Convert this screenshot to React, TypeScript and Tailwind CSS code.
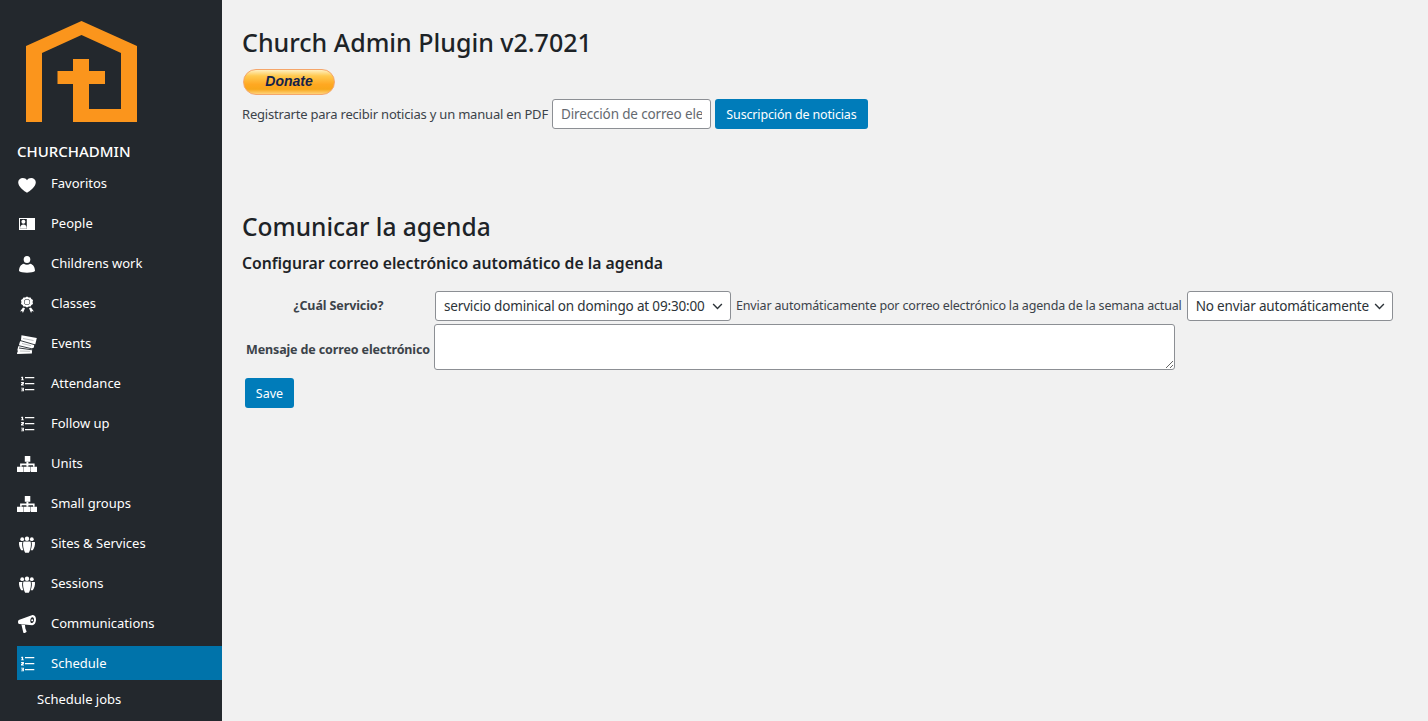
import type { ReactNode } from 'react';

const font = "[font-family:'Noto_Sans',sans-serif]";

function Svg({ children }: { children: ReactNode }) {
  return (
    <svg viewBox="0 0 20 20" className="h-5 w-5 shrink-0" fill="currentColor">
      {children}
    </svg>
  );
}

const HeartIcon = () => (
  <Svg>
    <path d="M10 18.800C7.500 17 1.200 13.300 1.200 8.200 1.200 5.500 3.400 3.900 5.800 3.900c1.800 0 3.400.9 4.200 2.300.8-1.400 2.400-2.300 4.200-2.300 2.400 0 4.600 1.600 4.600 4.300 0 5.100-6.300 8.800-8.800 10.600z" />
  </Svg>
);

const IdIcon = () => (
  <Svg>
    <path fillRule="evenodd" d="M2 4h16v12H2zM3 5v10h6.800V5z" />
    <circle cx="6.400" cy="7.800" r="2" />
    <path d="M3 14.800c0-3 1.500-4.200 3.400-4.200s3.400 1.200 3.400 4.200zM11 6.500h6v1.300h-6zM11 9.300h6v1.300h-6zM11 12.100h6v1.300h-6z" />
  </Svg>
);

const UserIcon = () => (
  <Svg>
    <ellipse cx="10" cy="5.500" rx="3.300" ry="3.600" />
    <path d="M2 17c0-3.800 1.800-6.600 4.800-7.300 1.800 1.300 4.600 1.300 6.400 0 3 .7 4.800 3.500 4.800 7.300-1.800 2.200-14.200 2.200-16 0z" />
  </Svg>
);

const AwardIcon = () => (
  <Svg>
    <path fillRule="evenodd" d="M10 2.600l1.700 .9 1.900-.1.800 1.700 1.600 1-.4 1.900.4 1.900-1.600 1-.8 1.700-1.900-.1-1.700.9-1.700-.9-1.900.1-.8-1.700-1.600-1 .4-1.900-.4-1.900 1.600-1 .8-1.700 1.900.1zM10 5a3 3 0 1 0 0 6 3 3 0 0 0 0-6z" />
    <circle cx="10" cy="8" r="2.500" />
    <path d="M6 13.600l2 .6-2.100 4.800-.8-2-2 .5zM14 13.600l-2 .6 2.100 4.800.8-2 2 .5z" />
  </Svg>
);

const TicketsIcon = () => (
  <Svg>
    <path d="M4.500 1.200L19.800 4l-1.500 6.300h-1l-.4 3.300-1.700.6-.3 5.400L.4 20c-.4-.3-.5-.8-.3-1.300.8-.8.800-2 .3-2.700l.8-3.500c.8-.3 1-1 .8-1.700L3 7.500c.9-.3 1.300-1 1-1.800z" />
    <path d="M3.400 6.600l14.500 4.200M1.800 11.700l14.800 3.500M2 14l13 1.800" fill="none" stroke="#23282d" strokeWidth=".9" />
    <path d="M6 4.500l10.500 2M5 9.500l9 2.200M3 17l10 .3" fill="none" stroke="#23282d" strokeWidth=".5" opacity=".6" />
  </Svg>
);

const OlIcon = () => (
  <Svg>
    <path d="M4.600 2.700h1.500v2.700h.8v.8H4.100v-.8h.7V3.800l-.7.3v-.9zM4.100 8.100h2.800v1.800l-1.300.8h1.300v.8H4v-1.600l1.500-1V9H4.100zM4.100 13.800h2.800v3.500H4.100v-.8h1.500V16h-1v-.7h1v-.7H4.100z" />
    <path d="M8 3.100h9.300v1.100H8zM8 9.100h9.300v1.100H8zM8 15.100h9.300v1.100H8z" />
  </Svg>
);

const NetworkIcon = () => (
  <Svg>
    <path d="M7.800 2h5.500v5.700H7.800zM0 12.700h6.500V18H0zM6.900 12.700h6.400V18H6.900zM13.700 12.700H20.300V18h-6.600z" />
    <path d="M9.400 7.700h2v1.900h6.200v3.100h-1.600v-1.500h-4.600v1.500h-2v-1.500H4.700v1.500H3.100V9.600h6.300z" />
  </Svg>
);

const GroupsIcon = () => (
  <Svg>
    <circle cx="5.200" cy="5.200" r="1.900" />
    <circle cx="10" cy="4.700" r="2.200" />
    <circle cx="14.800" cy="5.200" r="1.900" />
    <path d="M2.100 8h3.300c-.6 2.200-.3 5.300 1 8.200H4.200C2.800 14.300 1.600 10.700 2.100 8zM17.900 8h-3.300c.6 2.200.3 5.300-1 8.200h2.200c1.400-1.900 2.600-5.500 2.100-8.200z" />
    <path d="M6.500 7.500h7c1 2.500.2 7.800-1.700 11.300H8.200C6.300 15.300 5.500 10 6.500 7.500z" />
  </Svg>
);

const MegaphoneIcon = () => (
  <Svg>
    <path fillRule="evenodd" d="M15.500 1c2.300-.3 3.700 2 3.500 5 -.2 3-1.700 5-3.800 5.200L2.200 10C1.300 9.800 1 8.800 1 7.800c.1-.9.500-1.700 1.400-2zM15.300 3.300c-1.100.1-1.900 1.500-2 3.100-.1 1.600.6 2.700 1.700 2.600 1.100-.1 1.900-1.500 2-3.100.1-1.600-.6-2.700-1.700-2.600z" />
    <circle cx="15.200" cy="6.200" r="1" />
    <path d="M4.400 10.600l3.600.5.300 3.200 1.200 3c.2.600 0 .9-1.200 1.400s-1.700.3-2-.3z" />
  </Svg>
);

const menu = [
  { label: 'Favoritos', icon: <HeartIcon /> },
  { label: 'People', icon: <IdIcon /> },
  { label: 'Childrens work', icon: <UserIcon /> },
  { label: 'Classes', icon: <AwardIcon /> },
  { label: 'Events', icon: <TicketsIcon /> },
  { label: 'Attendance', icon: <OlIcon /> },
  { label: 'Follow up', icon: <OlIcon /> },
  { label: 'Units', icon: <NetworkIcon /> },
  { label: 'Small groups', icon: <NetworkIcon /> },
  { label: 'Sites & Services', icon: <GroupsIcon /> },
  { label: 'Sessions', icon: <GroupsIcon /> },
  { label: 'Communications', icon: <MegaphoneIcon /> },
  { label: 'Schedule', icon: <OlIcon />, active: true },
];

function Chevron() {
  return (
    <svg viewBox="0 0 12 8" className="pointer-events-none absolute right-[8px] top-[12px] h-[7px] w-[11px] text-[#2c3338]" fill="none" stroke="currentColor" strokeWidth="1.600">
      <path d="M1 1.200l5 5 5-5" />
    </svg>
  );
}

function Select({ value, className }: { value: string; className: string }) {
  return (
    <div className={`relative shrink-0 ${className}`}>
      <select
        defaultValue={value}
        className="h-[30px] w-full appearance-none rounded-[3px] border border-[#8c8f94] bg-white pl-[8px] pr-[20px] text-[13.5px] tracking-[-0.17px] text-[#2c3338] outline-none"
      >
        <option>{value}</option>
      </select>
      <Chevron />
    </div>
  );
}

export default function App() {
  return (
    <div className={`flex h-[721px] overflow-hidden bg-[#f1f1f1] ${font}`}>
      <aside className="w-[222px] shrink-0 bg-[#23282d] pl-[17px] text-white">
        <svg viewBox="0 0 111 101" className="ml-[9px] mt-[21px] h-[101px] w-[111px]" fill="#fb951c">
          <path d="M0 25L55.500 0 111 25v76H47V63H31.500V50H47V38h16v12h16v13H63v25h32V32L55.500 14 16 32v69H0z" />
        </svg>
        <div className="mt-[19px] h-[20px] text-[15px] font-medium leading-[20px]">CHURCHADMIN</div>
        <nav className="mt-[2px]">
          {menu.map((item) => (
            <div key={item.label} className="flex h-10 items-center">
              <div className={`flex h-[34px] w-full items-center gap-[14px] pt-[2px] text-[13px] ${item.active ? 'bg-[#0073aa]' : ''}`}>
                {item.icon}
                <span>{item.label}</span>
              </div>
            </div>
          ))}
          <div className="pl-[20px] text-[13px] leading-[32px]">Schedule jobs</div>
        </nav>
      </aside>

      <main className="flex-1 pl-[20px] text-[#3c434a]">
        <h1 className="mt-[25px] text-[25px] font-medium leading-[34px] text-[#1d2327]">Church Admin Plugin v2.7021</h1>
        <button
          type="button"
          className="mt-[10px] block h-[26px] w-[92px] ml-px rounded-[13px] border border-[#f5a66a] bg-[linear-gradient(#fff0c0,#ffc94f_25%,#ffa822_60%,#f8a71a_80%,#ffd27a)] pb-[2px] text-center text-[14px] font-bold italic leading-[22px] text-[#14224a] [font-family:'Liberation_Sans',sans-serif]"
        >
          Donate
        </button>
        <div className="mt-[4px] flex items-center text-[13px]">
          <span className="pt-px tracking-[-0.2px]">Registrarte para recibir noticias y un manual en PDF</span>
          <input
            className="ml-[4px] h-[30px] w-[159px] rounded-[3px] border border-[#8c8f94] bg-white px-[8px] text-[13.5px] tracking-[-0.15px] outline-none placeholder:text-[#646970]"
            placeholder="Dirección de correo electrónico"
          />
          <button type="button" className="ml-[4px] h-[30px] w-[153px] rounded-[3px] bg-[#007cba] pt-[2px] text-[12.5px] tracking-[-0.15px] text-white">
            Suscripción de noticias
          </button>
        </div>

        <h2 className="mt-[81px] text-[24.5px] font-medium leading-[34px] text-[#1d2327]">Comunicar la agenda</h2>
        <h3 className="mt-[7px] text-[15.75px] font-semibold leading-[24px] text-[#1d2327]">
          Configurar correo electrónico automático de la agenda
        </h3>

        <div className="mt-[16px] flex items-center text-[12.5px]">
          <label className="w-[193px] text-center font-bold tracking-[-0.1px]">¿Cuál Servicio?</label>
          <Select value="servicio dominical on domingo at 09:30:00" className="w-[296px]" />
          <span className="ml-[5px] whitespace-nowrap tracking-[-0.165px]">Enviar automáticamente por correo electrónico la agenda de la semana actual</span>
          <Select value="No enviar automáticamente" className="ml-[5px] w-[206px]" />
        </div>
        <div className="mt-[3px] flex items-center text-[12.5px]">
          <label className="w-[192px] whitespace-nowrap pl-[4px] pt-[6px] font-bold tracking-[-0.13px]">Mensaje de correo electrónico</label>
          <textarea className="h-[46px] w-[741px] rounded-[3px] border border-[#8c8f94] bg-white outline-none" />
        </div>
        <button type="button" className="ml-[3px] mt-[8px] block h-[30px] w-[49px] rounded-[3px] bg-[#007cba] pt-[2px] text-[12.5px] text-white">
          Save
        </button>
      </main>
    </div>
  );
}
